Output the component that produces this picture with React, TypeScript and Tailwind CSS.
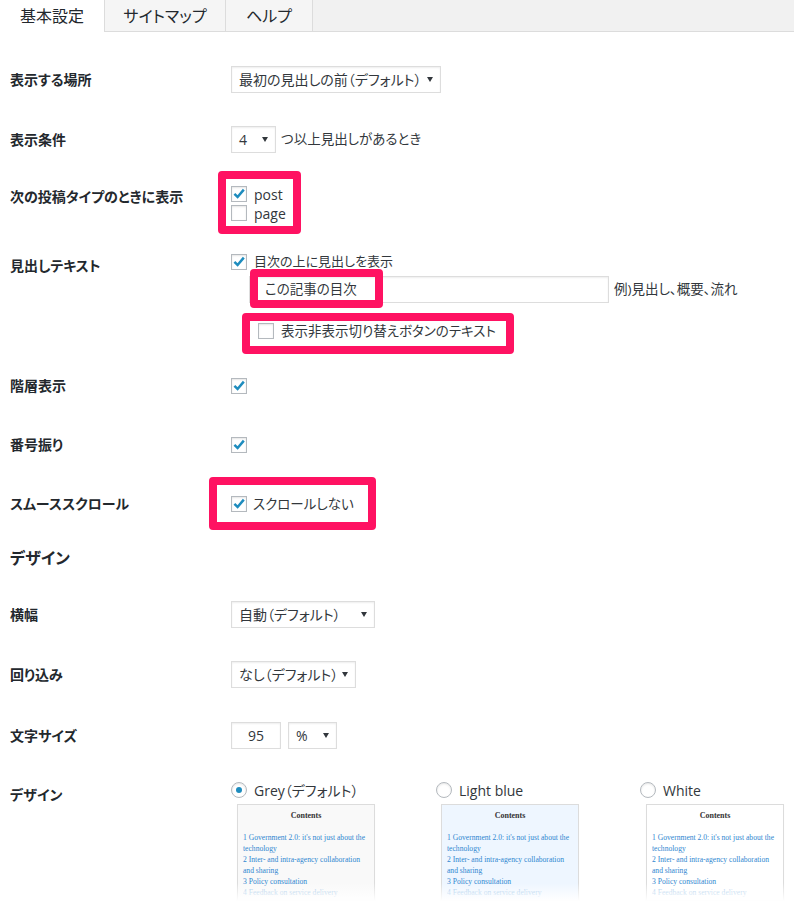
import React from "react";

const pink = "pointer-events-none absolute border-[8px] border-[#ff1262] rounded-[4px]";

function Check({ checked = false }: { checked?: boolean }) {
    return (
        <span className="relative inline-block w-[16px] h-[16px] shrink-0 border border-[#b4b9be] bg-white shadow-[inset_0_1px_2px_rgba(0,0,0,0.1)]">
            {checked && (
                <svg viewBox="0 0 14 14" className="absolute left-0 top-0 w-[14px] h-[14px]">
                    <path d="M2.4 6.8 L5.6 10 L11.8 2.6" fill="none" stroke="#1e8cbe" strokeWidth="2.5" />
                </svg>
            )}
        </span>
    );
}

function Radio({ checked = false }: { checked?: boolean }) {
    return (
        <span className="flex items-center justify-center w-[16px] h-[16px] shrink-0 rounded-full border border-[#b4b9be] bg-white shadow-[inset_0_1px_2px_rgba(0,0,0,0.1)]">
            {checked && <span className="w-[6px] h-[6px] rounded-full bg-[#1e8cbe]" />}
        </span>
    );
}

function Select({ label, className = "" }: { label: string; className?: string }) {
    return (
        <div className={`h-[27px] flex items-center justify-between pl-[7px] pr-[7px] border border-[#dddddd] bg-white shadow-[inset_0_1px_2px_rgba(0,0,0,0.07)] text-[14px] text-[#32373c] ${className}`}>
            <span className="whitespace-nowrap">{label}</span>
            <svg viewBox="0 0 6 5" className="w-[6px] h-[5px] shrink-0">
                <path d="M0 0H6L3 5Z" fill="#32373c" />
            </svg>
        </div>
    );
}

function Label({ children, className = "leading-[20px]" }: { children: React.ReactNode; className?: string }) {
    return (
        <div className={`w-[231px] shrink-0 pl-[10px] text-[14px] font-bold text-[#23282d] ${className}`}>
            {children}
        </div>
    );
}

function Preview({ bg }: { bg: string }) {
    return (
        <div className="relative w-[138px] h-[97px]">
            <div className={`w-full h-full border border-[#dcdcdc] overflow-hidden shadow-[0_1px_1px_rgba(0,0,0,0.04)] font-['Liberation_Serif',serif] ${bg}`}>
                <div className="pt-[5px] text-center text-[8px] leading-[11px] font-bold text-[#333333]">Contents</div>
                <div className="mt-[11px] pl-[5px] text-[7.6px] leading-[11px] text-[#2f86d0] whitespace-nowrap">
                    <div>1 Government 2.0: it's not just about the</div>
                    <div>technology</div>
                    <div>2 Inter- and intra-agency collaboration</div>
                    <div>and sharing</div>
                    <div>3 Policy consultation</div>
                    <div className="opacity-50">4 Feedback on service delivery</div>
                </div>
            </div>
            <div className="absolute left-0 right-0 bottom-0 h-[18px] bg-linear-to-b from-white/0 to-white" />
        </div>
    );
}

export default function App() {
    return (
        <div className="w-[794px] min-h-[901px] bg-white text-[#32373c] font-['Open_Sans','Noto_Sans_CJK_JP',sans-serif] [font-feature-settings:'palt']">
            {/* タブ */}
            <div className="flex h-[32px] text-[16px] text-[#23282d]">
                <div className="w-[104px] flex items-center justify-center bg-white">基本設定</div>
                <div className="w-[121px] flex items-center justify-center bg-[#f5f5f5] border-l border-b border-[#dcdcdc]">サイトマップ</div>
                <div className="w-[88px] flex items-center justify-center bg-[#f5f5f5] border-l border-r border-b border-[#dcdcdc]">ヘルプ</div>
                <div className="flex-1 bg-[#f1f1f1] border-b border-[#dcdcdc]" />
            </div>

            {/* 表示する場所 */}
            <div className="mt-[34px] flex items-center">
                <Label>表示する場所</Label>
                <Select label="最初の見出しの前（デフォルト）" className="w-[210px]" />
            </div>

            {/* 表示条件 */}
            <div className="mt-[33px] flex items-center">
                <Label>表示条件</Label>
                <div className="flex items-center gap-[5px]">
                    <Select label="4" className="w-[45px]" />
                    <span className="text-[13.5px]">つ以上見出しがあるとき</span>
                </div>
            </div>

            {/* 投稿タイプ */}
            <div className="mt-[33px] flex items-start">
                <Label className="leading-[20px] pt-[1px]">次の投稿タイプのときに表示</Label>
                <div className="relative">
                    <div className="flex items-center h-[16px] gap-[7px]">
                        <Check checked />
                        <span className="text-[14px]">post</span>
                    </div>
                    <div className="mt-[3px] flex items-center h-[16px] gap-[7px]">
                        <Check />
                        <span className="text-[14px]">page</span>
                    </div>
                    <div className={`${pink} -left-[13px] -top-[15px] w-[83px] h-[63px]`} />
                </div>
            </div>

            {/* 見出しテキスト */}
            <div className="mt-[33px] flex items-start">
                <Label className="leading-[20px] pt-[2px]">見出しテキスト</Label>
                <div>
                    <div className="flex items-center h-[16px] gap-[7px]">
                        <Check checked />
                        <span className="text-[13px]">目次の上に見出しを表示</span>
                    </div>
                    <div className="mt-[6px] ml-[18px] flex items-center gap-[5px]">
                        <div className="relative w-[360px] h-[27px] flex items-center pl-[15px] border border-[#dddddd] bg-white shadow-[inset_0_1px_2px_rgba(0,0,0,0.07)] text-[13.5px]">
                            この記事の目次
                            <div className={`${pink} left-0 -top-[8px] w-[133px] h-[39px]`} />
                        </div>
                        <span className="text-[13.5px]">例)見出し、概要、流れ</span>
                    </div>
                    <div className="relative mt-[20px] ml-[27px] flex items-center h-[16px] gap-[7px]">
                        <Check />
                        <span className="text-[13.5px]">表示非表示切り替えボタンのテキスト</span>
                        <div className={`${pink} -left-[16px] -top-[10px] w-[272px] h-[41px]`} />
                    </div>
                </div>
            </div>

            {/* 階層表示 */}
            <div className="mt-[39px] flex items-center">
                <Label className="leading-[16px]">階層表示</Label>
                <Check checked />
            </div>

            {/* 番号振り */}
            <div className="mt-[43px] flex items-center">
                <Label className="leading-[16px]">番号振り</Label>
                <Check checked />
            </div>

            {/* スムーススクロール */}
            <div className="mt-[43px] flex items-center">
                <Label className="leading-[16px]">スムーススクロール</Label>
                <div className="relative flex items-center h-[16px] gap-[6px]">
                    <Check checked />
                    <span className="text-[13.5px]">スクロールしない</span>
                    <div className={`${pink} -left-[22px] -top-[19px] w-[167px] h-[53px]`} />
                </div>
            </div>

            {/* デザイン */}
            <div className="mt-[36px] pl-[10px] text-[16px] leading-[20px] font-bold text-[#23282d]">デザイン</div>

            {/* 横幅 */}
            <div className="mt-[33px] flex items-center">
                <Label>横幅</Label>
                <Select label="自動（デフォルト）" className="w-[144px]" />
            </div>

            {/* 回り込み */}
            <div className="mt-[33px] flex items-center">
                <Label>回り込み</Label>
                <Select label="なし（デフォルト）" className="w-[125px]" />
            </div>

            {/* 文字サイズ */}
            <div className="mt-[34px] flex items-center">
                <Label>文字サイズ</Label>
                <div className="flex items-center gap-[7px]">
                    <div className="w-[50px] h-[27px] flex items-center justify-center border border-[#dddddd] bg-white shadow-[inset_0_1px_2px_rgba(0,0,0,0.07)] text-[14px]">95</div>
                    <Select label="%" className="w-[49px]" />
                </div>
            </div>

            {/* デザイン選択 */}
            <div className="mt-[33px] flex items-start">
                <Label className="leading-[20px] pt-[3px]">デザイン</Label>
                <div className="flex">
                    <div className="w-[205px]">
                        <div className="flex items-center h-[16px] gap-[7px]">
                            <Radio checked />
                            <span className="text-[14px]">Grey（デフォルト）</span>
                        </div>
                        <div className="mt-[6px] ml-[6px]">
                            <Preview bg="bg-[#f9f9f9]" />
                        </div>
                    </div>
                    <div className="w-[204px]">
                        <div className="flex items-center h-[16px] gap-[7px]">
                            <Radio />
                            <span className="text-[14px]">Light blue</span>
                        </div>
                        <div className="mt-[6px] ml-[5px]">
                            <Preview bg="bg-[#eef6ff]" />
                        </div>
                    </div>
                    <div className="w-[150px]">
                        <div className="flex items-center h-[16px] gap-[7px]">
                            <Radio />
                            <span className="text-[14px]">White</span>
                        </div>
                        <div className="mt-[6px] ml-[6px]">
                            <Preview bg="bg-white" />
                        </div>
                    </div>
                </div>
            </div>
        </div>
    );
}
